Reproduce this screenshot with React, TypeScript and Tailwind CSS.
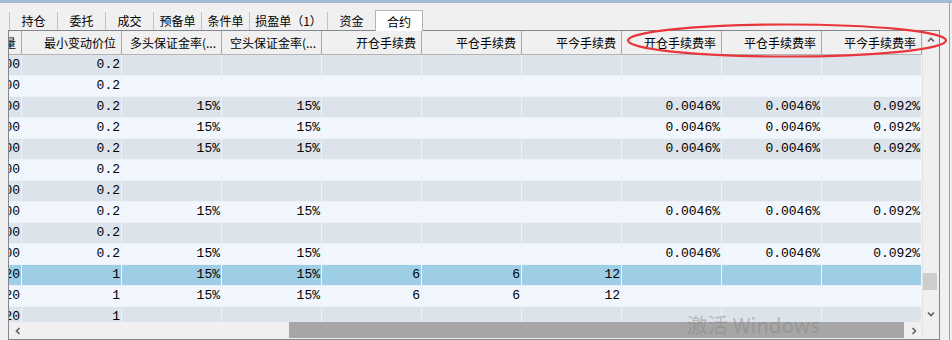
import React from "react";

type Row = string[];

const tabs = [
  { label: "持仓", w: "w-[48px]" },
  { label: "委托", w: "w-[48px]" },
  { label: "成交", w: "w-[48px]" },
  { label: "预备单", w: "w-[48px]" },
  { label: "条件单", w: "w-[48px]" },
  { label: "损盈单（1）", w: "w-[78px]" },
  { label: "资金", w: "w-[48px]" },
];

const headers = [
  "最大下单量",
  "最小变动价位",
  "多头保证金率(...",
  "空头保证金率(...",
  "开仓手续费",
  "平仓手续费",
  "平今手续费",
  "开仓手续费率",
  "平仓手续费率",
  "平今手续费率",
];

const plain: Row = ["100", "0.2", "", "", "", "", "", "", "", ""];
const rated: Row = ["100", "0.2", "15%", "15%", "", "", "", "0.0046%", "0.0046%", "0.092%"];
const fixed: Row = ["20", "1", "15%", "15%", "6", "6", "12", "", "", ""];

const rows: Row[] = [
  plain,
  plain,
  rated,
  rated,
  rated,
  plain,
  plain,
  rated,
  plain,
  rated,
  fixed,
  fixed,
  ["20", "1", "", "", "", "", "", "", "", ""],
];

const SELECTED = 10;

function Chevron({ dir }: { dir: "up" | "down" | "left" | "right" }) {
  const pts = {
    up: "1,5.5 4,2.5 7,5.5",
    down: "1,2.5 4,5.5 7,2.5",
    left: "5.5,1 2.5,4 5.5,7",
    right: "2.5,1 5.5,4 2.5,7",
  }[dir];
  return (
    <svg width="8" height="8" viewBox="0 0 8 8">
      <polyline points={pts} fill="none" stroke="#606060" strokeWidth="1.6" />
    </svg>
  );
}

export default function App() {
  return (
    <div className="relative w-[952px] h-[340px] overflow-hidden bg-[#f0f0f0] text-[12px] text-black font-['Noto_Sans_CJK_SC',sans-serif]">
      <div className="h-[3px] bg-[#a3bcd4]" />

      <div className="flex h-[337px]">
        <div className="w-[949px] flex flex-col">
          {/* tab strip */}
          <div className="flex items-end h-[27px] pl-[9px]">
            {tabs.map((t) => (
              <div
                key={t.label}
                className={`${t.w} h-[18px] border-l border-[#c2c2c2] flex items-center justify-center leading-none whitespace-nowrap`}
              >
                {t.label}
              </div>
            ))}
            <div className="relative z-10 -mb-px w-[48px] h-[21px] bg-white border border-b-0 border-[#b4b4b4] flex items-center justify-center pt-[2px] leading-none">
              合约
            </div>
          </div>

          {/* list view */}
          <div className="ml-[8px] w-[932px] h-[310px] border border-[#828790] flex">
            <div className="w-[913px] flex flex-col">
              <div className="h-[291px] overflow-hidden">
                <div className="-ml-[87px] w-[1000px]">
                  <div className="flex h-[24px] border-b border-[#b5b5b5] bg-[#f0f0f0]">
                    {headers.map((h) => (
                      <div
                        key={h}
                        className="w-[100px] shrink-0 border-r border-[#a8a8a8] text-right pr-[5px] leading-[23px] whitespace-nowrap overflow-hidden"
                      >
                        {h}
                      </div>
                    ))}
                  </div>
                  {rows.map((r, i) => {
                    const bg =
                      i === SELECTED ? "bg-[#9ecde6]" : i % 2 === 0 ? "bg-[#dce3eb]" : "bg-[#f1f7fd]";
                    return (
                      <div key={i} className={`flex h-[21px] border-b border-[#edf2f7] ${bg}`}>
                        {r.map((c, j) => (
                          <div
                            key={j}
                            className="w-[100px] shrink-0 border-r border-[#eef3f8] text-right pr-[1px] leading-[20px] text-[13px] font-['Liberation_Mono',monospace] whitespace-nowrap overflow-hidden"
                          >
                            {c}
                          </div>
                        ))}
                      </div>
                    );
                  })}
                </div>
              </div>

              {/* horizontal scrollbar */}
              <div className="h-[17px] flex bg-[#f0f0f0]">
                <div className="w-[17px] flex items-center justify-center">
                  <Chevron dir="left" />
                </div>
                <div className="flex-1 flex pl-[263px] pr-[1px] pb-px">
                  <div className="flex-1 bg-[#a6a6a6]" />
                </div>
                <div className="w-[17px] flex items-center justify-center">
                  <Chevron dir="right" />
                </div>
              </div>
            </div>

            {/* vertical scrollbar */}
            <div className="w-[17px] flex flex-col border-l border-[#e3e3e3]">
              <div className="h-[291px] flex flex-col bg-[#f0f0f0]">
                <div className="h-[17px] flex items-center justify-center pt-[1px]">
                  <Chevron dir="up" />
                </div>
                <div className="flex-1 pt-[225px]">
                  <div className="h-[17px] w-[14px] bg-[#cdcdcd]" />
                </div>
                <div className="h-[17px] flex items-center justify-center">
                  <Chevron dir="down" />
                </div>
              </div>
              <div className="h-[17px] bg-[#f0f0f0]" />
            </div>
          </div>
        </div>
        <div className="w-px bg-[#a0a0a0]" />
        <div className="flex-1" />
      </div>

      {/* annotation */}
      <svg className="absolute left-[625px] top-[22px]" width="324" height="38" viewBox="0 0 324 38">
        <ellipse cx="162" cy="18.5" rx="159" ry="16" fill="none" stroke="#e9363c" strokeWidth="2.2" />
      </svg>

      {/* activation watermark */}
      <div className="absolute left-[687px] top-[314px] text-[20.5px] leading-none whitespace-nowrap text-[rgba(130,130,130,0.45)] font-['Noto_Sans_CJK_SC',sans-serif]">
        激活 Windows
      </div>
    </div>
  );
}
